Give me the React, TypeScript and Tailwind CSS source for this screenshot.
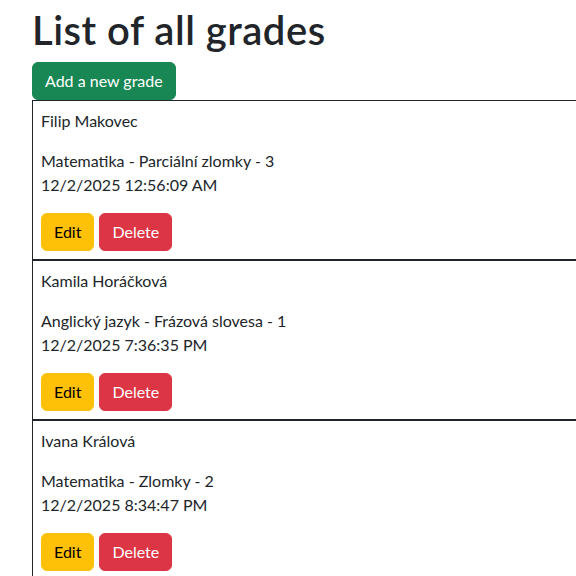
type Grade = {
  id: number;
  student: string;
  subject: string;
  topic: string;
  mark: number;
  createdAt: string;
};

const GRADES: Grade[] = [
  {
    id: 1,
    student: "Filip Makovec",
    subject: "Matematika",
    topic: "Parciální zlomky",
    mark: 3,
    createdAt: "12/2/2025 12:56:09 AM",
  },
  {
    id: 2,
    student: "Kamila Horáčková",
    subject: "Anglický jazyk",
    topic: "Frázová slovesa",
    mark: 1,
    createdAt: "12/2/2025 7:36:35 PM",
  },
  {
    id: 3,
    student: "Ivana Králová",
    subject: "Matematika",
    topic: "Zlomky",
    mark: 2,
    createdAt: "12/2/2025 8:34:47 PM",
  },
];

const font = "font-['Segoe_UI','Lato','Liberation_Sans',sans-serif]";

function GradeItem({ grade }: { grade: Grade }) {
  return (
    <div className="border border-[#212529] p-2">
      <p className="mb-4">{grade.student}</p>
      <p className="mb-4">
        {grade.subject} - {grade.topic} - {grade.mark}
        <br />
        {grade.createdAt}
      </p>
      <div className="flex gap-[5px]">
        <button className="h-[38px] rounded-md border border-[#ffc107] bg-[#ffc107] px-3 text-[#000]">
          Edit
        </button>
        <button className="h-[38px] rounded-md border border-[#dc3545] bg-[#dc3545] px-3 text-white">
          Delete
        </button>
      </div>
    </div>
  );
}

export default function App() {
  return (
    <div
      className={`${font} min-h-[576px] overflow-hidden bg-white pl-8 text-base leading-6 text-[#212529]`}
    >
      <h1 className="mb-2 pt-[6px] text-[40px] leading-[48px] font-semibold tracking-[0.5px]">
        List of all grades
      </h1>
      <button className="h-[38px] rounded-md border border-[#198754] bg-[#198754] px-3 text-white">
        Add a new grade
      </button>
      <div className="w-[600px]">
        {GRADES.map((grade) => (
          <GradeItem key={grade.id} grade={grade} />
        ))}
      </div>
    </div>
  );
}
